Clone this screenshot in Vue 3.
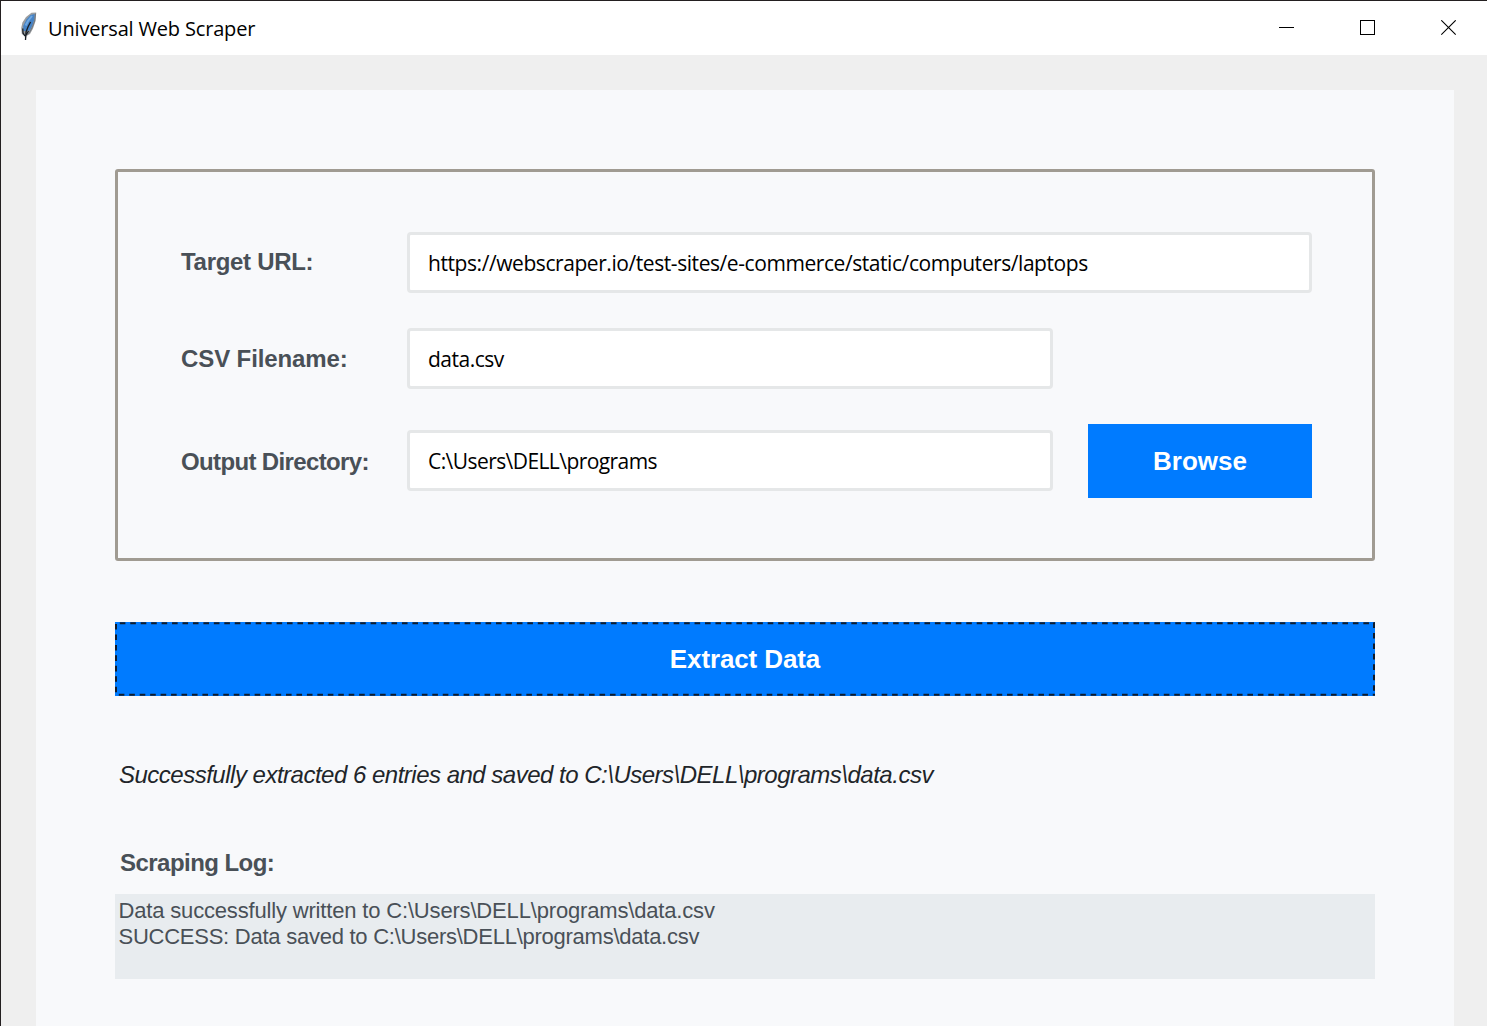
<script setup>
import { ref } from 'vue'

const url = ref('https://webscraper.io/test-sites/e-commerce/static/computers/laptops')
const filename = ref('data.csv')
const directory = ref('C:\\Users\\DELL\\programs')
const status = ref('Successfully extracted 6 entries and saved to C:\\Users\\DELL\\programs\\data.csv')
const log = ref([
  'Data successfully written to C:\\Users\\DELL\\programs\\data.csv',
  'SUCCESS: Data saved to C:\\Users\\DELL\\programs\\data.csv',
])
</script>

<template>
  <div class="window">
    <header class="titlebar">
      <svg class="feather" width="18" height="30" viewBox="0 0 18 30">
        <path d="M16.2 .6 L11.5 .8 L6 5 L2.4 10.5 L1.2 16 L1.8 22 L4.5 24 L5.5 28 L6.5 24 L10 22 L13 16.5 L15.6 9 Z" fill="#9a9da0" />
        <path d="M14.8 2 L10.6 3 L6.4 7.6 L3.2 14 L3.4 19 L6 19 L9.8 18.5 L12.6 13 L14.4 7.5 Z" fill="#4583c6" />
        <path d="M12 4 L8 9 L5.6 13.5" fill="none" stroke="#6fa8e2" stroke-width="2" />
        <path d="M15.6 1.5 L14.6 9 L12.4 15 L9.8 20 L6.8 23" fill="none" stroke="#73787e" stroke-width="1" />
        <path d="M10.6 10 L8.2 14.5 L6 20 L5.5 28 M2.8 16.5 L3 21 L5 24 M8.5 19 L6 23" fill="none" stroke="#171d24" stroke-width="1.3" />
      </svg>
      <span class="title">Universal Web Scraper</span>
      <div class="controls">
        <svg width="16" height="16" viewBox="0 0 16 16"><path d="M0 7.5H15" stroke="#000" fill="none" /></svg>
        <svg width="16" height="16" viewBox="0 0 16 16"><rect x=".5" y=".5" width="14" height="14" stroke="#000" fill="none" /></svg>
        <svg width="16" height="16" viewBox="0 0 16 16"><path d="M.3 .3L14.7 14.7M14.7 .3L.3 14.7" stroke="#000" stroke-width="1.1" fill="none" /></svg>
      </div>
    </header>

    <main class="panel">
      <section class="group">
        <div class="row first">
          <label class="url-label">Target URL:</label>
          <div class="field wide">{{ url }}</div>
        </div>
        <div class="row second">
          <label class="file-label">CSV Filename:</label>
          <div class="field file">{{ filename }}</div>
        </div>
        <div class="row third">
          <label class="dir-label">Output Directory:</label>
          <div class="field dir">{{ directory }}</div>
          <button class="browse">Browse</button>
        </div>
      </section>

      <button class="extract">
        <span>Extract Data</span>
        <svg class="focus" width="1260" height="74" viewBox="0 0 1260 74">
          <path d="M4.8 1.2H1260" />
          <path d="M3.8 72.7H1260" />
          <path d="M1 2V72" />
          <path d="M1259 .5V72" />
        </svg>
      </button>

      <p class="status">{{ status }}</p>
      <h2 class="log-title">Scraping Log:</h2>
      <div class="log">
        <div v-for="(line, i) in log" :key="i">{{ line }}</div>
      </div>
    </main>
  </div>
</template>

<style>
body {
  margin: 0;
  overflow: hidden;
}
</style>

<style scoped>
.window {
  box-sizing: border-box;
  width: 1487px;
  height: 1026px;
  overflow: hidden;
  border-top: 1px solid #231f20;
  border-left: 1px solid #231f20;
  background: #efefef;
  font-family: "Liberation Sans", Arial, sans-serif;
  display: flex;
  flex-direction: column;
}
.titlebar {
  height: 54px;
  flex: none;
  background: #fff;
  display: flex;
  align-items: center;
}
.feather {
  margin-left: 19px;
  margin-top: -2px;
}
.title {
  margin-left: 10px;
  margin-top: 1px;
  font: 20px/30px "Open Sans", "Noto Sans", sans-serif;
  letter-spacing: -0.17px;
  color: #000;
  white-space: nowrap;
}
.controls {
  margin-left: auto;
  margin-right: 30px;
  display: flex;
  gap: 65px;
}
.controls svg {
  display: block;
}
.panel {
  box-sizing: border-box;
  flex: 1;
  min-height: 0;
  margin: 35px 33px 0 35px;
  padding: 79px 79px 0;
  background: #f8f9fb;
  display: flex;
  flex-direction: column;
}
.group {
  box-sizing: border-box;
  flex: none;
  height: 391.5px;
  border: 3px solid #a09b92;
  border-radius: 3px;
  padding: 60px 60px 0 63px;
}
.row {
  display: flex;
  align-items: center;
}
.second,
.third {
  margin-top: 35px;
}
label {
  width: 226px;
  flex: none;
  font-size: 24px;
  line-height: 28px;
  font-weight: bold;
  color: #495057;
  white-space: nowrap;
}
.url-label {
  letter-spacing: -0.3px;
  padding-bottom: 2px;
}
.file-label {
  letter-spacing: -0.1px;
}
.dir-label {
  letter-spacing: -0.64px;
  padding-top: 2px;
}
.field {
  box-sizing: border-box;
  width: 646px;
  height: 61px;
  border: 3px solid #e5e7e8;
  border-radius: 4px;
  background: #fff;
  padding-left: 18px;
  font: 21px/57px "Open Sans", "Noto Sans", sans-serif;
  color: #000;
  white-space: nowrap;
}
.wide {
  width: 905px;
  letter-spacing: -0.43px;
}
.file {
  letter-spacing: -0.5px;
}
.dir {
  letter-spacing: -0.57px;
}
button {
  border: 0;
  border-radius: 0;
  padding: 0;
  background: #007bff;
  color: #fff;
  font: bold 26px/30px "Liberation Sans", Arial, sans-serif;
}
.browse {
  width: 224px;
  height: 74px;
  padding-bottom: 1px;
  margin: 0 0 -1px 35px;
}
.extract {
  position: relative;
  flex: none;
  width: 1260px;
  height: 74px;
  margin-top: 61.5px;
  letter-spacing: -0.12px;
}
.focus {
  position: absolute;
  left: 0;
  top: 0;
}
.focus path {
  fill: none;
  stroke: #111c2b;
  stroke-width: 2;
  stroke-dasharray: 5.6 4.85;
}
.status {
  margin: 65px 0 0 4px;
  font-size: 24px;
  line-height: 28px;
  font-style: italic;
  letter-spacing: -0.5px;
  color: #212529;
  white-space: nowrap;
}
.log-title {
  margin: 60px 0 0 5px;
  font-size: 24px;
  line-height: 28px;
  letter-spacing: -0.54px;
  color: #495057;
  white-space: nowrap;
}
.log {
  box-sizing: border-box;
  flex: none;
  height: 85px;
  margin-top: 17px;
  padding: 4px 3.5px;
  background: #e8ecef;
  font-size: 22px;
  line-height: 26px;
  letter-spacing: -0.17px;
  color: #495057;
  white-space: nowrap;
}
.log div + div {
  letter-spacing: -0.25px;
}
</style>
